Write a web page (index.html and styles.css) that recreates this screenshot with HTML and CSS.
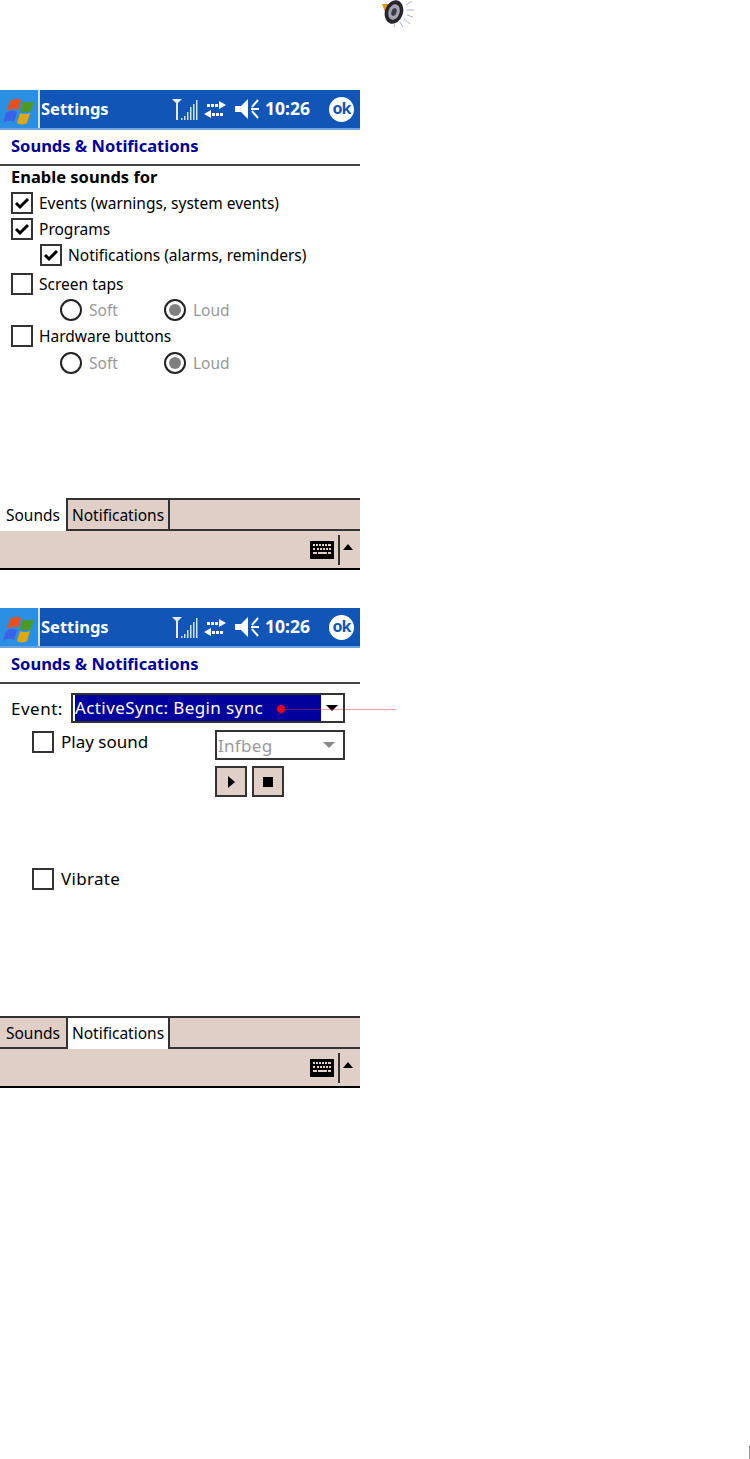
FILE: index.html
```html
<!DOCTYPE html>
<html lang="en">
<head>
  <meta charset="UTF-8">
  <title>Sounds &amp; Notifications</title>
  <meta name="viewport" content="width=device-width, initial-scale=1">
  <link rel="stylesheet" href="styles.css">
</head>
<body>

  <svg class="defs" width="0" height="0">
    <symbol id="winlogo" viewBox="0 0 38 38">
      <path d="M10 11 Q16 7 21 10 L18 20 Q13 17 7 21 Z" fill="#e8501c"/>
      <path d="M23 11 Q28 14 34 11 L31 21 Q26 23 20 21 Z" fill="#4d9a1e"/>
      <path d="M6 23 Q12 19 17 22 L14 32 Q9 29 3 33 Z" fill="#3a62e8"/>
      <path d="M20 23 Q25 25 30 23 L27 33 Q22 36 17 33 Z" fill="#e0a810"/>
    </symbol>
    <symbol id="status" viewBox="0 0 90 26">
      <path d="M0 3h10l-4 4v17h-2v-17z" fill="#e4ecf8"/>
      <path d="M9 22h1.500v2h-1.500zM12 20h1.500v4h-1.500zM15 16h1.500v8h-1.500zM18 11h1.500v13h-1.500zM21 8h1.500v16h-1.500zM24 4h1.500v20h-1.500z" fill="#d4e0f4"/>
      <path d="M47 5l7 4-7 4zM43 8h3v3h-3zM39 8h3v3h-3zM35 8h3v3h-3z" fill="#fff"/>
      <path d="M39 14l-7 4 7 4zM40 17h3v3h-3zM44 17h3v3h-3zM48 17h3v3h-3z" fill="#fff"/>
      <path d="M63 10h6l7-7v20l-7-7h-6z" fill="#fff"/>
      <path d="M86 4l-6 7M79 13h8M80 15l6 7" stroke="#fff" stroke-width="2" fill="none"/>
    </symbol>
    <symbol id="keyboard" viewBox="0 0 24 18">
      <rect width="24" height="18" fill="#000"/>
      <path d="M3 3h2v2h-2zM6 3h2v2h-2zM9 3h2v2h-2zM12 3h2v2h-2zM15 3h2v2h-2zM18 3h3v2h-3zM3 7h2v2h-2zM7 7h2v2h-2zM10 7h2v2h-2zM13 7h2v2h-2zM16 7h2v2h-2zM19 7h2v2h-2zM3 11h4v2h-4zM8 11h9v2h-9zM18 11h3v2h-3z" fill="#e0cfc6"/>
    </symbol>
    <symbol id="check" viewBox="0 0 22 22">
      <path d="M5 11l4 4 8-8" stroke="#000" stroke-width="3" fill="none"/>
    </symbol>
  </svg>

  <div class="top-icon">
    <svg width="36" height="28" viewBox="0 0 36 28">
      <path d="M2 4l9 0 2 8-8 0z" fill="#e0961e"/>
      <ellipse cx="14" cy="12" rx="9" ry="12" transform="rotate(18 14 12)" fill="#26262c"/>
      <ellipse cx="14" cy="12" rx="5.500" ry="8" transform="rotate(18 14 12)" fill="#a4a4b2"/>
      <ellipse cx="14" cy="12" rx="2.500" ry="4" transform="rotate(18 14 12)" fill="#3c3c46"/>
      <path d="M26 5l6-4M27 10h7M27 15l6 2M24 19l6 5M20 22l3 5M15 24l-1 3" stroke="#a8b0d8" stroke-width="1"/>
    </svg>
  </div>

  <div class="screen">
    <div class="titlebar">
      <div class="start"><svg width="38" height="38"><use href="#winlogo"/></svg></div>
      <div class="app-name">Settings</div>
      <svg class="status" width="90" height="26"><use href="#status"/></svg>
      <div class="clock">10:26</div>
      <div class="ok">ok</div>
    </div>
    <div class="heading">Sounds &amp; Notifications</div>
    <div class="content">
      <div class="row group-title">Enable sounds for</div>
      <div class="row"><span class="box"><svg width="22" height="22"><use href="#check"/></svg></span>Events (warnings, system events)</div>
      <div class="row"><span class="box"><svg width="22" height="22"><use href="#check"/></svg></span>Programs</div>
      <div class="row sub"><span class="box"><svg width="22" height="22"><use href="#check"/></svg></span>Notifications (alarms, reminders)</div>
      <div class="row gap"><span class="box"></span>Screen taps</div>
      <div class="row radios">
        <span class="radio-item"><span class="radio"></span>Soft</span>
        <span class="radio-item"><span class="radio on"></span>Loud</span>
      </div>
      <div class="row"><span class="box"></span>Hardware buttons</div>
      <div class="row radios gap-s">
        <span class="radio-item"><span class="radio"></span>Soft</span>
        <span class="radio-item"><span class="radio on"></span>Loud</span>
      </div>
    </div>
    <div class="tabs">
      <div class="tab active sounds">Sounds</div>
      <div class="tab notif">Notifications</div>
    </div>
    <div class="menubar">
      <svg width="24" height="18"><use href="#keyboard"/></svg>
      <span class="divider"></span>
      <span class="up"></span>
    </div>
  </div>

  <div class="screen second">
    <div class="titlebar">
      <div class="start"><svg width="38" height="38"><use href="#winlogo"/></svg></div>
      <div class="app-name">Settings</div>
      <svg class="status" width="90" height="26"><use href="#status"/></svg>
      <div class="clock">10:26</div>
      <div class="ok">ok</div>
    </div>
    <div class="heading">Sounds &amp; Notifications</div>
    <div class="content">
      <div class="event-row">
        <span class="event-label">Event:</span>
        <div class="select">
          <span class="selected">ActiveSync: Begin sync</span>
          <span class="arrow"></span>
        </div>
        <span class="callout"></span>
      </div>
      <div class="sound-row">
        <div class="play-label"><span class="box"></span>Play sound</div>
        <div class="sound-controls">
          <div class="select small">
            <span class="disabled">Infbeg</span>
            <span class="arrow grey"></span>
          </div>
          <div class="buttons">
            <span class="btn"><span class="play"></span></span>
            <span class="btn"><span class="stop"></span></span>
          </div>
        </div>
      </div>
      <div class="vibrate"><span class="box"></span>Vibrate</div>
    </div>
    <div class="tabs">
      <div class="tab sounds">Sounds</div>
      <div class="tab active notif">Notifications</div>
    </div>
    <div class="menubar">
      <svg width="24" height="18"><use href="#keyboard"/></svg>
      <span class="divider"></span>
      <span class="up"></span>
    </div>
  </div>

  <div class="page-mark"></div>

</body>
</html>
```

FILE: styles.css
```css
html, body {
  margin: 0;
  padding: 0;
}

body {
  width: 750px;
  height: 1459px;
  overflow: hidden;
  background-color: #fff;
  color: #000;
  font-family: 'Noto Sans', sans-serif;
  font-size: 15.5px;
  display: flex;
  flex-direction: column;
}

.defs {
  position: absolute;
}

.top-icon {
  height: 90px;
  padding-left: 380px;
}

.top-icon svg {
  display: block;
}

.screen {
  width: 360px;
  height: 480px;
  display: flex;
  flex-direction: column;
}

.second {
  margin-top: 38px;
}

.titlebar {
  height: 38px;
  background-color: #1156b6;
  border-bottom: 2px solid #6fa3e0;
  display: flex;
  align-items: center;
  color: #fff;
  flex-shrink: 0;
}

.start {
  width: 38px;
  height: 38px;
  background-color: #2b8fe4;
  border-right: 2px solid #cfe2f6;
  flex-shrink: 0;
}

.app-name {
  font-weight: bold;
  font-size: 16.5px;
  margin-left: 1px;
  padding-bottom: 2px;
  width: 131px;
}

.status {
  flex-shrink: 0;
}

.clock {
  font-weight: bold;
  font-size: 17.5px;
  margin-left: 3px;
  padding-bottom: 2px;
  width: 64px;
}

.ok {
  width: 25px;
  height: 25px;
  border-radius: 50%;
  background-color: #fff;
  color: #1156b6;
  font-weight: bold;
  font-size: 16px;
  line-height: 23px;
  text-align: center;
  letter-spacing: -1px;
}

.heading {
  height: 34px;
  line-height: 32px;
  padding-left: 11px;
  font-size: 16.5px;
  font-weight: bold;
  color: #00009c;
  border-bottom: 2px solid #444;
  flex-shrink: 0;
}

.content {
  flex: 1;
  position: relative;
}

.row {
  height: 26px;
  display: flex;
  align-items: center;
  padding-left: 11px;
  gap: 6px;
}

.group-title {
  height: 20px;
  margin-bottom: 4px;
  font-size: 16.5px;
  font-weight: bold;
}

.sub {
  padding-left: 40px;
}

.gap {
  margin-top: 3px;
}

.gap-s {
  margin-top: 1px;
}

.box {
  width: 18px;
  height: 18px;
  border: 2px solid #333;
  display: inline-block;
  flex-shrink: 0;
  position: relative;
}

.box svg {
  position: absolute;
  left: -2px;
  top: -2px;
}

.radios {
  padding-left: 60px;
  color: #999;
  gap: 0;
}

.radio-item {
  width: 104px;
  display: flex;
  align-items: center;
  gap: 7px;
}

.radio {
  width: 18px;
  height: 18px;
  border: 2px solid #222;
  border-radius: 50%;
  display: inline-block;
  position: relative;
  flex-shrink: 0;
}

.radio.on::after {
  content: '';
  position: absolute;
  left: 3px;
  top: 3px;
  width: 12px;
  height: 12px;
  border-radius: 50%;
  background-color: #808080;
}

.tabs {
  height: 33px;
  background-color: #e0cfc6;
  border-top: 2px solid #333;
  border-bottom: 2px solid #333;
  box-sizing: border-box;
  display: flex;
  flex-shrink: 0;
}

.tab {
  line-height: 29px;
  text-align: center;
  box-sizing: border-box;
}

.tab.sounds {
  width: 66px;
  margin-top: -2px;
  padding-top: 3px;
}

.tab.notif {
  width: 104px;
  padding-top: 1px;
  border-left: 2px solid #333;
  border-right: 2px solid #333;
}

.tab.active {
  background-color: #fff;
  height: 33px;
}

.tab.active.notif {
  height: 31px;
}

.menubar {
  height: 39px;
  background-color: #e0cfc6;
  border-bottom: 2px solid #000;
  box-sizing: border-box;
  display: flex;
  align-items: center;
  justify-content: flex-end;
  padding-right: 7px;
  flex-shrink: 0;
}

.divider {
  width: 2px;
  height: 30px;
  background-color: #333;
  margin: 0 3px 0 4px;
}

.up {
  width: 0;
  height: 0;
  border-left: 5px solid transparent;
  border-right: 5px solid transparent;
  border-bottom: 6px solid #000;
  margin: 0 0 6px 0;
}

.event-row {
  position: relative;
  display: flex;
  align-items: center;
  padding: 9px 0 0 11px;
  font-size: 17px;
}

.event-label {
  width: 60px;
  letter-spacing: 0.5px;
}

.select {
  box-sizing: border-box;
  width: 274px;
  height: 30px;
  border: 2px solid #333;
  display: flex;
  align-items: center;
  justify-content: space-between;
  padding: 0 5px 0 2px;
}

.selected {
  flex: 0 0 246px;
  height: 26px;
  line-height: 26px;
  background-color: #00009c;
  color: #fff;
  letter-spacing: 0.4px;
  white-space: nowrap;
}

.arrow {
  width: 0;
  height: 0;
  border-left: 6px solid transparent;
  border-right: 6px solid transparent;
  border-top: 6px solid #000;
}

.arrow.grey {
  border-top-color: #888;
}

.callout {
  position: absolute;
  left: 276px;
  top: 25px;
  width: 120px;
  height: 1px;
  background-color: rgba(232, 40, 60, 0.45);
}

.callout::before {
  content: '';
  position: absolute;
  left: 1px;
  top: -4px;
  width: 8px;
  height: 8px;
  border-radius: 50%;
  background-color: #e8001c;
}

.sound-row {
  display: flex;
  padding: 7px 0 0 32px;
  font-size: 17px;
}

.play-label {
  width: 183px;
  display: flex;
  align-items: flex-start;
  gap: 7px;
  line-height: 22px;
  margin-top: 1px;
}

.sound-controls {
  display: flex;
  flex-direction: column;
  gap: 6px;
}

.select.small {
  width: 130px;
  height: 30px;
  padding-left: 1px;
  padding-right: 8px;
}

.disabled {
  color: #999;
  letter-spacing: 0.3px;
}

.buttons {
  display: flex;
  gap: 5px;
}

.btn {
  box-sizing: border-box;
  width: 32px;
  height: 31px;
  border: 2px solid #333;
  background-color: #e0cfc6;
  display: flex;
  align-items: center;
  justify-content: center;
}

.play {
  width: 0;
  height: 0;
  border-top: 6px solid transparent;
  border-bottom: 6px solid transparent;
  border-left: 7px solid #000;
}

.stop {
  width: 10px;
  height: 10px;
  background-color: #000;
}

.vibrate {
  display: flex;
  align-items: center;
  gap: 7px;
  padding: 70px 0 0 32px;
  font-size: 17px;
  letter-spacing: 0.3px;
}

.page-mark {
  margin: auto 0 0 749px;
  width: 1px;
  height: 13px;
  background-color: #999;
}
```
